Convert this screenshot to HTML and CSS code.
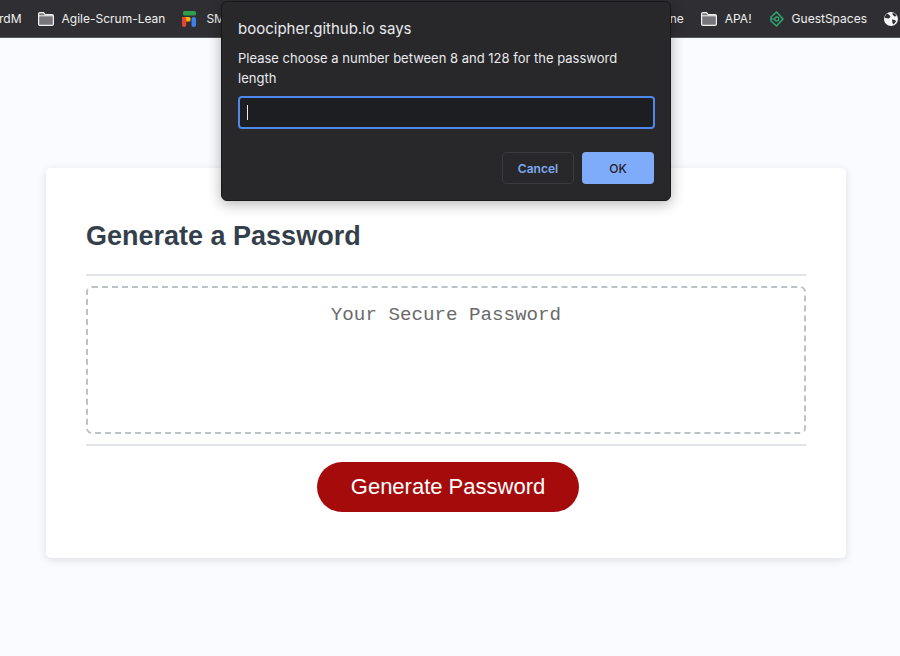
FILE: index.html
```html
<!DOCTYPE html>
<html lang="en">
<head>
    <meta charset="UTF-8">
    <meta name="viewport" content="width=device-width, initial-scale=1.0">
    <title>Password Generator</title>
    <link rel="stylesheet" href="styles.css">
</head>
<body>
    <header class="bookmarks">
        <div class="bookmark-group">
            <span class="bookmark">rdM</span>
            <span class="bookmark">
                <svg class="icon" width="16" height="14" viewBox="0 0 16 14"><path d="M.6 12V2C.6 1.200 1.200.6 2 .6h3.600l1.600 2H14c.8 0 1.400.6 1.400 1.400v8c0 .8-.6 1.400-1.400 1.400H2c-.8 0-1.400-.6-1.400-1.400z" fill="#77777b" stroke="#f2f2f2" stroke-width="1.200"/><path d="M1 3.800h14" stroke="#f2f2f2"/></svg>
                Agile-Scrum-Lean
            </span>
            <span class="bookmark bookmark-wide">
                <svg class="icon" width="14" height="16" viewBox="0 0 14 16"><rect x="1" y="0" width="13" height="4.500" rx="1.500" fill="#2f9e4f"/><rect x="0" y="6" width="8.500" height="4.500" rx="1.500" fill="#f6b60f"/><rect x="0" y="6" width="4.200" height="10" rx="2" fill="#e8452f"/><rect x="9.500" y="6" width="4.500" height="10" rx="2" fill="#3f7fe8"/></svg>
                SM
            </span>
        </div>
        <div class="bookmark-group">
            <span class="bookmark">ne</span>
            <span class="bookmark">
                <svg class="icon" width="16" height="14" viewBox="0 0 16 14"><path d="M.6 12V2C.6 1.200 1.200.6 2 .6h3.600l1.600 2H14c.8 0 1.400.6 1.400 1.400v8c0 .8-.6 1.400-1.400 1.400H2c-.8 0-1.400-.6-1.400-1.400z" fill="#77777b" stroke="#f2f2f2" stroke-width="1.200"/><path d="M1 3.800h14" stroke="#f2f2f2"/></svg>
                APA!
            </span>
            <span class="bookmark bookmark-guest">
                <svg class="icon" width="14" height="16" viewBox="0 0 14 16"><path d="M6.500 1L13 8l-6.500 7L1 10V6z" fill="none" stroke="#2fa874" stroke-width="1.500"/><circle cx="6.800" cy="8" r="2" fill="none" stroke="#2fa874" stroke-width="1.300"/><path d="M1 8h4" stroke="#2fa874" stroke-width="1.300"/></svg>
                GuestSpaces
            </span>
            <span class="bookmark">
                <svg class="icon" width="14" height="14" viewBox="0 0 14 14"><circle cx="7" cy="7" r="7" fill="#f4f4f4"/><path d="M3 1.500l2.500 1.500 1 2-2 1.500L1.500 6 .5 5zM8 7.500l3 .5 1 1.500-2.500 3-1-1.500zM8.500 1l2.500.5 1.500 2.500-2 .5-2-2z" fill="#2f2f33"/></svg>
            </span>
        </div>
    </header>

    <main class="wrapper">
        <div class="card">
            <h2 class="card-title">Generate a Password</h2>
            <div class="card-body">
                <textarea class="password" placeholder="Your Secure Password" readonly></textarea>
            </div>
            <div class="card-footer">
                <button class="btn-generate">Generate Password</button>
            </div>
        </div>
    </main>

    <div class="dialog">
        <h1 class="dialog-title">boocipher.github.io says</h1>
        <p class="dialog-message">Please choose a number between 8 and 128 for the password length</p>
        <div class="dialog-input"><span class="caret"></span></div>
        <div class="dialog-buttons">
            <button class="btn-cancel">Cancel</button>
            <button class="btn-ok">OK</button>
        </div>
    </div>
</body>
</html>
```

FILE: styles.css
```css
html, body {
    height: 100%;
}
body {
    margin: 0;
    overflow: hidden;
    background-color: #f9fbff;
    font-family: "Liberation Sans", Arial, sans-serif;
}
.bookmarks {
    display: flex;
    justify-content: space-between;
    height: 37px;
    background-color: #2f2f33;
    border-bottom: 1px solid #55565a;
    box-sizing: content-box;
    font-family: Inter, sans-serif;
    font-size: 12px;
    color: #f0f0f0;
}
.bookmark-group {
    display: flex;
    align-items: center;
    gap: 16px;
}
.bookmark-group:first-child {
    margin-left: -1px;
}
.bookmark-group:last-child {
    gap: 17px;
    padding-right: 2px;
}
.bookmark {
    display: flex;
    align-items: center;
    gap: 8px;
    white-space: nowrap;
}
.bookmark-wide {
    gap: 10px;
    margin-left: 1px;
}
.bookmark-guest {
    margin-left: 1px;
}
.icon {
    flex-shrink: 0;
}
.wrapper {
    width: 800px;
    margin: 130px 0 0 46px;
}
.card {
    box-sizing: border-box;
    height: 390px;
    padding: 40px 40px 0;
    background-color: #ffffff;
    border-radius: 5px;
    box-shadow: 0 2px 8px rgba(0, 0, 0, 0.12);
}
.card-title {
    margin: 0;
    height: 66px;
    font-size: 27px;
    line-height: 57px;
    font-weight: bold;
    color: #343f4b;
    border-bottom: 2px solid #e0e4e8;
}
.card-body {
    padding: 10px 0;
}
.password {
    display: block;
    box-sizing: border-box;
    width: 100%;
    height: 148px;
    padding: 18px 14px 14px;
    border: 2px dashed #bcc2c8;
    border-radius: 6px;
    outline: none;
    resize: none;
    background: #ffffff;
    font-family: "Liberation Mono", "Courier New", monospace;
    font-size: 19.200px;
    line-height: 1;
    text-align: center;
}
.password::placeholder {
    color: #6a6a6a;
}
.card-footer {
    display: flex;
    justify-content: center;
    padding-top: 16px;
    border-top: 2px solid #e0e4e8;
}
.btn-generate {
    width: 262px;
    height: 50px;
    margin-left: 4px;
    border: none;
    border-radius: 25px;
    background-color: #a60b0b;
    color: #ffffff;
    font-family: "Liberation Sans", Arial, sans-serif;
    font-size: 22px;
}
.dialog {
    position: absolute;
    top: 1px;
    left: 221px;
    box-sizing: border-box;
    width: 450px;
    height: 200px;
    padding: 18px 16px 16px;
    background-color: #28282a;
    border: 1px solid #18181a;
    border-radius: 6px;
    box-shadow: 0 3px 14px rgba(0, 0, 0, 0.3);
    font-family: Inter, sans-serif;
    color: #e8eaed;
}
.dialog-title {
    margin: 0;
    font-size: 15px;
    line-height: 18px;
    font-weight: 400;
}
.dialog-message {
    margin: 10px 0 0;
    font-size: 13px;
    line-height: 20px;
}
.dialog-input {
    display: flex;
    align-items: center;
    box-sizing: border-box;
    width: 417px;
    height: 33px;
    margin-top: 8px;
    padding-left: 7px;
    background-color: #1d1e22;
    border: 2px solid #4f87ea;
    border-radius: 4px;
}
.caret {
    width: 1px;
    height: 15px;
    background-color: #e8eaed;
}
.dialog-buttons {
    display: flex;
    justify-content: flex-end;
    gap: 8px;
    width: 416px;
    margin-top: 23px;
}
.btn-cancel, .btn-ok {
    width: 72px;
    height: 32px;
    border-radius: 4px;
    font-family: Inter, sans-serif;
    font-size: 12px;
}
.btn-cancel {
    background-color: transparent;
    border: 1px solid #3a3b3e;
    color: #7ea8f0;
    font-weight: 600;
}
.btn-ok {
    background-color: #7fabfb;
    border: none;
    color: #1f2024;
    font-weight: 500;
}
```
